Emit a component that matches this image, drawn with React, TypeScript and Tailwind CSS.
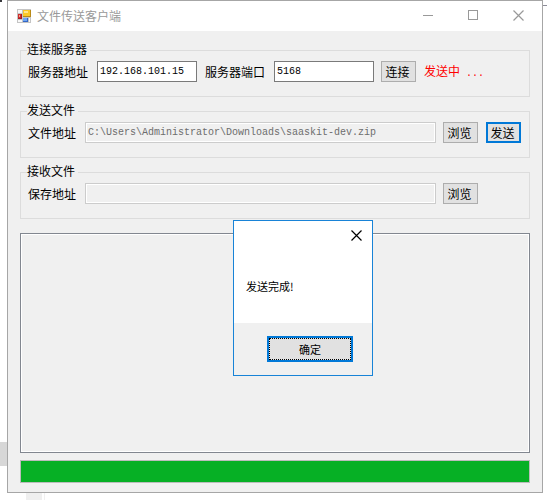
import type { ReactNode } from "react";

const Group = ({ title, children }: { title: string; children: ReactNode }) => (
  <fieldset className="h-[54px] border border-[#dcdcdc] pl-[7px]">
    <legend className="ml-[-1px] h-[14px] pr-[3px] leading-[11px]">{title}</legend>
    <div className="mt-[4px] flex h-[21px] items-center">{children}</div>
  </fieldset>
);

const Label = ({ children }: { children: string }) => (
  <span className="shrink-0 leading-[14px] whitespace-nowrap">{children}</span>
);

const Field = ({ value, className }: { value: string; className: string }) => (
  <div className={`h-[21px] shrink-0 overflow-hidden border pl-[2px] font-['Liberation_Mono','Noto_Sans_CJK_SC',monospace] text-[10px] leading-[19px] whitespace-nowrap ${className}`}>
    {value}
  </div>
);

const Button = ({ children, primary = false, className = "" }: { children: string; primary?: boolean; className?: string }) => (
  <button
    className={`flex h-[21px] w-[35px] shrink-0 items-center justify-center bg-[#e1e1e1] pr-[2px] leading-[14px] whitespace-nowrap ${
      primary ? "border-2 border-[#0078d7]" : "border border-[#adadad]"
    } ${className}`}
  >
    {children}
  </button>
);

const CloseIcon = () => (
  <svg width="11" height="11" viewBox="0 0 11 11" fill="none" stroke="currentColor" strokeWidth="1.2">
    <path d="M.5.5l10 10M10.5.5l-10 10" />
  </svg>
);

const FormIcon = () => (
  <svg width="14" height="14" viewBox="0 0 14 14" shapeRendering="crispEdges">
    <path d="M0 0h14v14H0z" fill="#c4c4c4" />
    <path d="M1 1h4v3H1zM1 11h4v2H1zM12 9h1v4h-1z" fill="#f8f8f8" />
    <path d="M1 5h4v5H1z" fill="#a51d22" />
    <path d="M1 5h3v4H1z" fill="#d02c2b" />
    <path d="M2 6h1v2H2z" fill="#f3a08d" />
    <path d="M6 1h8v7H6z" fill="#b98a18" />
    <path d="M6 1h7v6H6z" fill="#fbc928" />
    <path d="M7 2h4v2H7z" fill="#ffe58e" />
    <path d="M6 9h5v4H6z" fill="#3467c6" />
    <path d="M6 9h4v3H6z" fill="#6ea6f5" />
  </svg>
);

const MessageBox = () => (
  <div className="absolute top-[220px] left-[233px] flex h-[156px] w-[140px] flex-col border border-[#1883d7] bg-white font-['Noto_Sans_CJK_SC',sans-serif] text-[11px] text-black">
    <div className="flex justify-end pt-[9px] pr-[10px]">
      <CloseIcon />
    </div>
    <p className="mt-[37px] ml-[12px] leading-[16px]">发送完成!</p>
    <div className="mt-auto flex h-[52px] justify-end bg-[#f0f0f0] pt-[13px] pr-[19px]">
      <button className="flex h-[26px] w-[86px] border-2 border-[#0078d7] bg-[#e1e1e1]">
        <span className="flex h-full w-full items-center justify-center border border-dotted border-black pb-px leading-[16px]">
          确定
        </span>
      </button>
    </div>
  </div>
);

export default function App() {
  return (
    <div className="relative h-[500px] w-[550px] overflow-hidden bg-white font-['Noto_Sans_CJK_SC',sans-serif] text-[12px] text-black">
      {/* bits of the window behind */}
      <div className="absolute top-[442px] left-0 h-[24px] w-[7px] bg-[#d7d7d7]" />
      <div className="absolute top-[492px] left-[26px] h-[8px] w-[16px] bg-[#efefef]" />
      <div className="absolute top-[492px] left-[44px] h-[8px] w-px bg-[#f0f0f0]" />
      <div className="absolute top-0 left-0 h-[2px] w-[2px] bg-[#38383c]" />
      <div className="absolute top-[5px] left-[542px] h-px w-[5px] border-t border-dashed border-[#8c8c98]" />

      <div className="relative ml-[7px] flex h-[493px] w-[536px] flex-col border border-[#a6a6a6] bg-[#f0f0f0]">
        <header className="flex h-[30px] shrink-0 items-center bg-white pr-[18px] pl-[9px] text-[#999]">
          <FormIcon />
          <span className="ml-[6px] leading-[16px]">文件传送客户端</span>
          <div className="mb-[2px] ml-auto flex items-center gap-[35px]">
            <svg width="10" height="11" viewBox="0 0 10 11" stroke="currentColor">
              <path d="M0 5.5h10" />
            </svg>
            <svg width="10" height="10" viewBox="0 0 10 10" fill="none" stroke="currentColor" shapeRendering="crispEdges">
              <path d="M.5.5h9v9h-9z" />
            </svg>
            <CloseIcon />
          </div>
        </header>

        <main className="flex flex-col gap-[7px] px-[12px] pt-[12px]">
          <Group title="连接服务器">
            <Label>服务器地址</Label>
            <Field value="192.168.101.15" className="ml-[9px] w-[100px] border-[#7a7a7a] bg-white" />
            <span className="w-[8px]" />
            <Label>服务器端口</Label>
            <Field value="5168" className="ml-[9px] w-[100px] border-[#7a7a7a] bg-white" />
            <Button className="ml-[7px]">连接</Button>
            <span className="ml-[8px] pt-[2px] leading-[14px] whitespace-pre text-[#f00]">
              发送中<span className="ml-[6px] font-['Liberation_Mono',monospace] text-[10px]">...</span>
            </span>
          </Group>
          <Group title="发送文件">
            <Label>文件地址</Label>
            <Field
              value="C:\Users\Administrator\Downloads\saaskit-dev.zip"
              className="ml-[9px] w-[351px] border-[#ccc] text-[#6d6d6d] inset-ring inset-ring-white"
            />
            <Button className="ml-[7px]">浏览</Button>
            <Button primary className="ml-[8px]">发送</Button>
          </Group>
          <Group title="接收文件">
            <Label>保存地址</Label>
            <Field value="" className="ml-[9px] w-[351px] border-[#ccc] inset-ring inset-ring-white" />
            <Button className="ml-[7px]">浏览</Button>
          </Group>

          <div className="mt-[7px] h-[220px] border border-[#828790] inset-ring inset-ring-white" />
          <div className="h-[23px] border border-[#bcbcbc] bg-[#06b025]" />
        </main>
      </div>

      <MessageBox />
    </div>
  );
}
